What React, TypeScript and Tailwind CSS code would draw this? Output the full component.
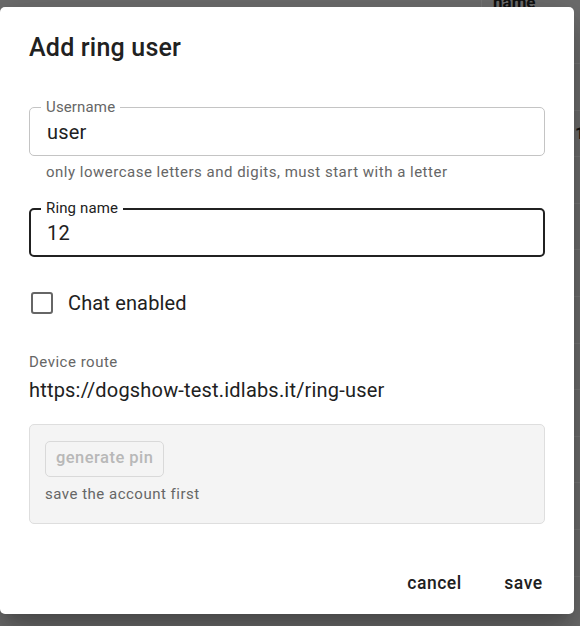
import { useState } from 'react';

const tableRows = ['', '1', '', '', '', '', '', '', '', '', ''];

function OutlinedField({
  label,
  value,
  focused,
  helper,
}: {
  label: string;
  value: string;
  focused?: boolean;
  helper?: string;
}) {
  return (
    <div>
      <div
        className={`relative h-[49px] rounded-[5px] ${
          focused ? 'border-2 border-[#212121]' : 'border border-[#c4c4c4]'
        }`}
      >
        <span
          className={`absolute bg-white px-[5px] text-[15px] leading-[20px] tracking-[0.15px] ${
            focused ? 'left-[10px] top-[-12.5px] text-[#212121]' : 'left-[11px] top-[-11.5px] text-[#666666]'
          }`}
        >
          {label}
        </span>
        <input
          defaultValue={value}
          className={`h-full w-full bg-transparent text-[20px] tracking-[0.19px] text-[#212121] outline-none ${
            focused ? 'px-[16px]' : 'px-[17px]'
          }`}
        />
      </div>
      {helper && (
        <p className="mt-[4px] px-[17px] text-[15px] leading-[25px] tracking-[0.5px] text-[#666666]">{helper}</p>
      )}
    </div>
  );
}

export default function App() {
  const [chat, setChat] = useState(false);

  return (
    <div className="relative h-[626px] w-[580px] overflow-hidden bg-[#6d6d6d] font-['Roboto',sans-serif]">
      {/* page behind the backdrop */}
      <div className="ml-[481px] border-l border-[#777777]">
        <div className="h-[70px] border-b border-[#777777] pl-[11px]">
          <div className="-mt-[6px] text-[17px] font-bold leading-[16px] text-[#111111]">name</div>
        </div>
        {tableRows.map((cell, i) => (
          <div key={i} className="flex h-[46.6px] items-center border-b border-[#777777] pl-[93px]">
            <span className="text-[17px] font-bold text-[#111111]">{cell}</span>
          </div>
        ))}
      </div>

      {/* dialog */}
      <div className="absolute left-0 top-[7px] flex h-[607px] w-[574px] flex-col rounded-[5px] bg-white shadow-[0_11px_15px_-7px_rgba(0,0,0,0.2),0_24px_38px_3px_rgba(0,0,0,0.14),0_9px_46px_8px_rgba(0,0,0,0.12)]">
        <h2 className="px-[29px] pt-[21px] font-['Roboto_Medium','Roboto',sans-serif] text-[25px] font-medium leading-[40px] tracking-[0.19px] text-[#212121]">
          Add ring user
        </h2>

        <div className="px-[29px]">
          <div className="mt-[39px]">
            <OutlinedField
              label="Username"
              value="user"
              helper="only lowercase letters and digits, must start with a letter"
            />
          </div>

          <div className="mt-[23px]">
            <OutlinedField label="Ring name" value="12" focused />
          </div>

          {/* Chat enabled */}
          <label className="mt-[20.5px] flex h-[50px] cursor-pointer items-center">
            <span
              onClick={() => setChat(!chat)}
              className={`ml-[2px] flex h-[22px] w-[22px] items-center justify-center rounded-[3px] border-[2.5px] ${
                chat ? 'border-[#212121] bg-[#212121]' : 'border-[#666666]'
              }`}
            >
              {chat && (
                <svg viewBox="0 0 24 24" className="h-[18px] w-[18px] fill-white">
                  <path d="M9 16.17 4.83 12l-1.42 1.41L9 19 21 7l-1.41-1.41z" />
                </svg>
              )}
            </span>
            <span className="ml-[15px] text-[20px] tracking-[0.15px] text-[#212121]">Chat enabled</span>
          </label>

          {/* Device route */}
          <div className="mt-[22px] text-[15px] leading-[25px] tracking-[0.5px] text-[#666666]">Device route</div>
          <div className="mt-[1px] text-[20px] leading-[28px] tracking-[0.19px] text-[#212121]">
            https://dogshow-test.idlabs.it/ring-user
          </div>

          {/* Pin box */}
          <div className="mt-[20px] h-[100px] rounded-[5px] border border-[#dedede] bg-[#f4f4f4] px-[15px] pt-[16px]">
            <button
              disabled
              className="h-[36px] rounded-[5px] border border-[#d9d9d9] px-[10px] font-['Roboto_Medium','Roboto',sans-serif] text-[16.5px] font-medium tracking-[0.45px] text-[#b8b8b8]"
            >
              generate pin
            </button>
            <p className="mt-[5px] text-[15px] leading-[25px] tracking-[0.5px] text-[#666666]">
              save the account first
            </p>
          </div>
        </div>

        {/* Actions */}
        <div className="mt-auto flex justify-end gap-[12px] pb-[9px] pr-[12px]">
          <button className="h-[44px] min-w-[77px] rounded-[5px] px-[10px] font-['Roboto_Medium','Roboto',sans-serif] text-[17.5px] font-medium tracking-[0.5px] text-[#212121]">
            cancel
          </button>
          <button className="h-[44px] min-w-[77px] rounded-[5px] px-[10px] font-['Roboto_Medium','Roboto',sans-serif] text-[17.5px] font-medium tracking-[0.5px] text-[#212121]">
            save
          </button>
        </div>
      </div>
    </div>
  );
}
